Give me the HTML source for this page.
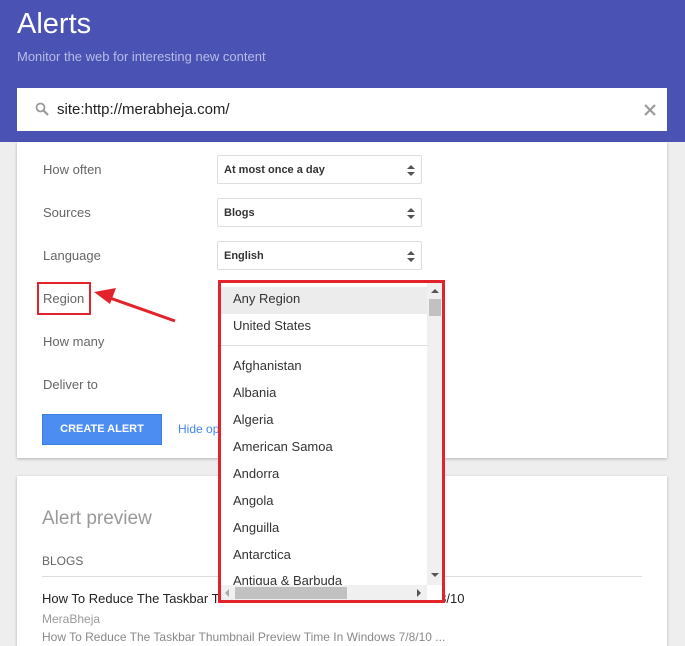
<!DOCTYPE html>
<html><head><style>
body{margin:0;width:685px;height:637px;overflow:hidden;background:#eeeeee;font-family:"Liberation Sans",sans-serif;position:relative}
.hdr{position:absolute;left:0;top:0;width:685px;height:142px;background:#4a53b4}
.t{position:absolute;left:17px;top:8px;font-size:29px;color:#fff}
.sub{position:absolute;left:17px;top:49px;font-size:13px;color:#b8bce6}
.search{position:absolute;left:17px;top:88px;width:650px;height:43px;background:#fff}
.card{position:absolute;background:#fff;box-shadow:0 1px 3px rgba(0,0,0,.25)}
.lbl{position:absolute;left:43px;font-size:13px;color:#666}
.sel{position:absolute;left:217px;width:203px;height:27px;border:1px solid #ddd;border-radius:2px;font-size:11px;font-weight:bold;color:#333;display:flex;align-items:center;padding-left:6px;box-sizing:border-box;width:205px;height:29px}
.sel:after{content:"";position:absolute;right:6px;top:9px;border:4px solid transparent;border-bottom:4px solid #555;border-top:0}
.sel:before{content:"";position:absolute;right:6px;top:16px;border:4px solid transparent;border-top:4px solid #555;border-bottom:0}
.dd{position:absolute;left:218px;top:280px;width:221px;height:317px;border:3px solid #e3232b;background:#fff;overflow:hidden}
.it{position:absolute;left:12px;font-size:13px;color:#333}
</style></head><body>
<div class="hdr"><div class="t">Alerts</div><div class="sub">Monitor the web for interesting new content</div></div>
<div class="card" style="left:17px;top:142px;width:650px;height:316px"></div>
<div class="search">
<svg style="position:absolute;left:18px;top:14px" width="14" height="14" viewBox="0 0 14 14"><circle cx="5.5" cy="5.5" r="4" fill="none" stroke="#999" stroke-width="1.8"/><path d="M8.5 8.5L13 13" stroke="#999" stroke-width="2.2"/></svg>
<div style="position:absolute;left:40px;top:13px;font-size:15px;color:#222">site:http://merabheja.com/</div>
<svg style="position:absolute;left:627px;top:16px" width="12" height="12"><path d="M1 1L11 11M11 1L1 11" stroke="#999" stroke-width="2"/></svg>
</div>
<div class="lbl" style="top:162px">How often</div>
<div class="lbl" style="top:205px">Sources</div>
<div class="lbl" style="top:248px">Language</div>
<div class="lbl" style="top:291px">Region</div>
<div style="position:absolute;left:37px;top:282px;width:50px;height:29px;border:2px solid #e3232b"></div>
<div class="lbl" style="top:334px">How many</div>
<div class="lbl" style="top:377px">Deliver to</div>
<div class="sel" style="top:155px">At most once a day</div>
<div class="sel" style="top:198px">Blogs</div>
<div class="sel" style="top:241px">English</div>
<svg style="position:absolute;left:90px;top:280px" width="90" height="45"><path d="M85 41L20 18" stroke="#e3232b" stroke-width="3"/><path d="M4 12L26 8L20 24Z" fill="#e3232b"/></svg>
<div style="position:absolute;left:42px;top:414px;width:120px;height:31px;background:#4b8df0;border:1px solid #3b7de0;box-sizing:border-box;color:#fff;font-size:11px;font-weight:bold;text-align:center;line-height:29px">CREATE ALERT</div>
<div style="position:absolute;left:178px;top:422px;font-size:12px;color:#4285f4">Hide options</div>
<div class="card" style="left:17px;top:476px;width:650px;height:170px"></div>
<div style="position:absolute;left:42px;top:508px;font-size:19px;color:#999">Alert preview</div>
<div style="position:absolute;left:42px;top:554px;font-size:12px;color:#666">BLOGS</div>
<div style="position:absolute;left:42px;top:576px;width:600px;height:1px;background:#ddd"></div>
<div style="position:absolute;left:42px;top:591px;font-size:13px;color:#222;white-space:nowrap">How To Reduce The Taskbar Thumbnail Preview Time In Windows 7/8/10</div>
<div style="position:absolute;left:42px;top:612px;font-size:12px;color:#999">MeraBheja</div>
<div style="position:absolute;left:42px;top:630px;font-size:12px;color:#888;white-space:nowrap">How To Reduce The Taskbar Thumbnail Preview Time In Windows 7/8/10 ...</div>
<div class="dd">
<div style="position:absolute;left:0;top:4px;width:206px;height:27px;background:#ececec"></div>
<div class="it" style="top:8px">Any Region</div>
<div class="it" style="top:35px">United States</div>
<div style="position:absolute;left:0;top:62px;width:206px;height:1px;background:#ddd"></div>
<div class="it" style="top:75px">Afghanistan</div>
<div class="it" style="top:102px">Albania</div>
<div class="it" style="top:129px">Algeria</div>
<div class="it" style="top:156px">American Samoa</div>
<div class="it" style="top:183px">Andorra</div>
<div class="it" style="top:210px">Angola</div>
<div class="it" style="top:237px">Anguilla</div>
<div class="it" style="top:264px">Antarctica</div>
<div class="it" style="top:290px">Antigua &amp; Barbuda</div>
<div style="position:absolute;left:206px;top:0;width:15px;height:302px;background:#f0f0f0"></div>
<div style="position:absolute;left:208px;top:16px;width:12px;height:17px;background:#c1c1c1"></div>
<div style="position:absolute;left:210px;top:6px;border:4px solid transparent;border-bottom:4px solid #555;border-top:0"></div>
<div style="position:absolute;left:210px;top:290px;border:4px solid transparent;border-top:4px solid #555;border-bottom:0"></div>
<div style="position:absolute;left:0;top:302px;width:206px;height:15px;background:#f0f0f0"></div>
<div style="position:absolute;left:14px;top:304px;width:112px;height:12px;background:#c1c1c1"></div>
<div style="position:absolute;left:4px;top:306px;border:4px solid transparent;border-right:4px solid #aaa;border-left:0"></div>
<div style="position:absolute;left:196px;top:306px;border:4px solid transparent;border-left:4px solid #555;border-right:0"></div>
</div>
</body></html>
